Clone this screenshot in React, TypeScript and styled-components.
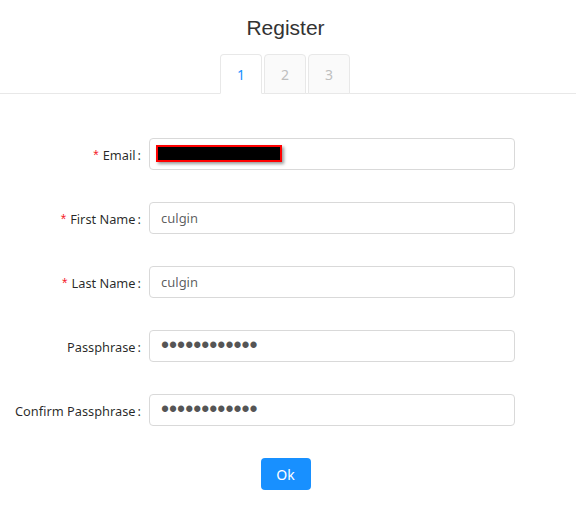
import styled, { createGlobalStyle } from "styled-components";

const Global = createGlobalStyle`
  body {
    margin: 0;
    background: #fff;
    font-family: "Noto Sans", "Open Sans", sans-serif;
  }
`;

const Page = styled.div`
  width: 576px;
  height: 516px;
  display: flex;
  flex-direction: column;
`;

const Title = styled.h1`
  margin: 0;
  padding: 14px 5px 0 0;
  height: 40px;
  text-align: center;
  font-family: "Liberation Sans", Arial, sans-serif;
  font-weight: normal;
  font-size: 21px;
  line-height: 28px;
  color: #333;
`;

const TabBar = styled.div`
  display: flex;
  justify-content: center;
  gap: 2px;
  border-bottom: 1px solid #e8e8e8;
  padding-right: 6px;
`;

const Tab = styled.div<{ $active?: boolean }>`
  width: 40px;
  height: 38px;
  margin-bottom: -1px;
  display: flex;
  align-items: center;
  justify-content: center;
  border: 1px solid #e8e8e8;
  border-bottom-color: ${(p) => (p.$active ? "#fff" : "#e8e8e8")};
  border-radius: 4px 4px 0 0;
  background: ${(p) => (p.$active ? "#fff" : "#fafafa")};
  color: ${(p) => (p.$active ? "#1890ff" : "#bfbfbf")};
  font-size: 14px;
`;

const Form = styled.form`
  margin: 44px 0 0;
  display: flex;
  flex-direction: column;
  gap: 32px;
`;

const Row = styled.div`
  display: grid;
  grid-template-columns: 141px 366px;
  column-gap: 8px;
  align-items: center;
  height: 32px;
`;

const Label = styled.label`
  text-align: right;
  font-size: 12.8px;
  color: rgba(0, 0, 0, 0.85);
  white-space: nowrap;
  padding-top: 1px;
`;

const Star = styled.span`
  color: #f5222d;
  margin-right: 4px;
  font-family: SimSun, "Liberation Sans", sans-serif;
  font-size: 14px;
`;

const Colon = styled.span`
  margin-left: 2px;
`;

const Input = styled.input`
  box-sizing: border-box;
  width: 100%;
  height: 32px;
  padding: 4px 11px;
  border: 1px solid #d9d9d9;
  border-radius: 4px;
  font-family: "Noto Sans", sans-serif;
  font-size: 13px;
  color: rgba(0, 0, 0, 0.65);
  outline: none;
  &[type="password"] {
    font-family: "Liberation Sans", sans-serif;
    font-size: 23px;
    padding: 0 11px 2px;
    color: #555;
  }
`;

const Field = styled.div`
  box-sizing: border-box;
  height: 32px;
  padding: 0 6px;
  border: 1px solid #d9d9d9;
  border-radius: 4px;
  display: flex;
  align-items: center;
`;

const Redacted = styled.div`
  width: 122px;
  height: 13px;
  margin-bottom: 1px;
  background: #000;
  border: 2px solid #f00;
  box-shadow: 2px 2px 3px rgba(0, 0, 0, 0.4);
`;

const Actions = styled.div`
  display: flex;
  justify-content: center;
  padding-right: 5px;
`;

const Button = styled.button`
  width: 50px;
  height: 32px;
  border: none;
  border-radius: 4px;
  background: #1890ff;
  color: #fff;
  font-family: "Noto Sans", sans-serif;
  font-size: 14px;
  cursor: pointer;
`;

const fields = [
  { id: "firstName", label: "First Name", required: true, value: "culgin" },
  { id: "lastName", label: "Last Name", required: true, value: "culgin" },
  { id: "pass", label: "Passphrase", type: "password", value: "............" },
  { id: "confirm", label: "Confirm Passphrase", type: "password", value: "............" },
];

export default function App() {
  return (
    <Page>
      <Global />
      <Title>Register</Title>
      <TabBar>
        <Tab $active>1</Tab>
        <Tab>2</Tab>
        <Tab>3</Tab>
      </TabBar>
      <Form onSubmit={(e) => e.preventDefault()}>
        <Row>
          <Label htmlFor="email">
            <Star>*</Star>Email<Colon>:</Colon>
          </Label>
          <Field>
            <Redacted />
          </Field>
        </Row>
        {fields.map((f) => (
          <Row key={f.id}>
            <Label htmlFor={f.id}>
              {f.required && <Star>*</Star>}
              {f.label}
              <Colon>:</Colon>
            </Label>
            <Input id={f.id} type={f.type || "text"} defaultValue={f.value} />
          </Row>
        ))}
        <Actions>
          <Button type="submit">Ok</Button>
        </Actions>
      </Form>
    </Page>
  );
}
